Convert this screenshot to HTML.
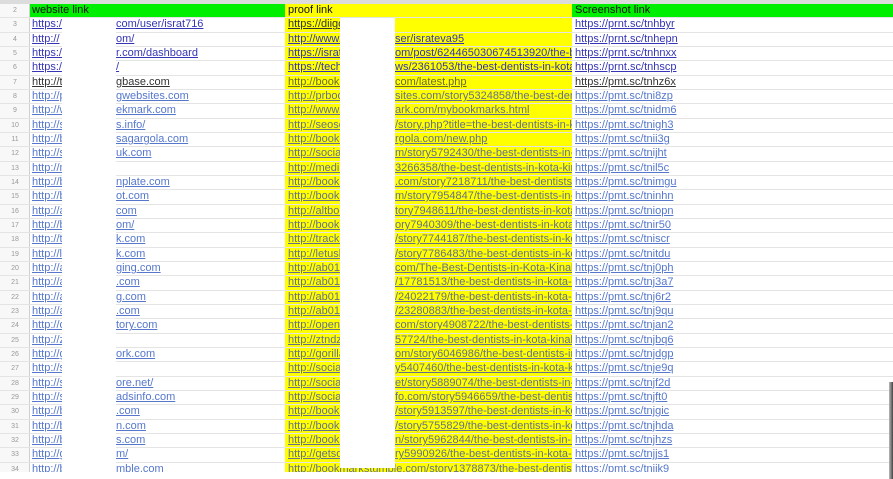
<!DOCTYPE html>
<html><head><meta charset="utf-8">
<style>
*{margin:0;padding:0;box-sizing:border-box}
body{width:893px;height:479px;overflow:hidden;background:#fff;font-family:"Liberation Sans",Arial,sans-serif;font-size:11px;position:relative}
.top{position:absolute;left:0;top:0;width:893px;height:4px;background:#dcdcdc}
.num{position:absolute;left:0;top:4px;width:30px;height:468px;background:#f8f8f8;border-right:1px solid #d0d0d0}
.yel{position:absolute;left:285px;top:4px;width:287px;height:468px;background:#ffff00}
.r{position:absolute;left:0;width:893px;height:14.33px;border-bottom:1px solid #e4e4e4;line-height:13px;white-space:nowrap}
.r span{position:absolute;top:0;overflow:hidden;text-decoration:underline}
.r i{position:absolute;left:0;width:30px;text-align:center;font-style:normal;font-size:7px;color:#999}
.a1{left:32px;width:30px}
.a2{left:116px;width:168px}
.b1{left:288px;width:52px}
.b2{left:395px;width:177px}
.c{left:575px;width:300px}
.d span{color:#3535b5}
.k span{color:#333}
.l span{color:#5577cc}
.l .b1,.l .b2{color:#66708a}
.h{top:4px;background:none;border-bottom:1px solid #e4e4e4}
.h span{text-decoration:none;color:#111}
.g{position:absolute;top:4px;height:14px;background:#00ee00}
.wb{position:absolute;background:#fff}
</style></head><body>
<div class="top"></div>
<div class="num"></div>
<div class="yel"></div>
<div class="g" style="left:30px;width:255px"></div>
<div class="g" style="left:572px;width:321px"></div>
<div class="r h"><i>2</i><span class="a1" style="width:200px">website link</span><span class="b1" style="width:200px">proof link</span><span class="c">Screenshot link</span></div>

<div class="r d" style="top:18.3px"><i>3</i><span class="a1">https:/</span><span class="a2">com/user/israt716</span><span class="b1" style="color:#333">https://diigo</span><span class="b2"></span><span class="c">https://prnt.sc/tnhbyr</span></div>
<div class="r d" style="top:32.7px"><i>4</i><span class="a1">http://</span><span class="a2">om/</span><span class="b1">http://www.</span><span class="b2">ser/israteva95</span><span class="c">https://prnt.sc/tnhepn</span></div>
<div class="r d" style="top:47px"><i>5</i><span class="a1">https:/</span><span class="a2">r.com/dashboard</span><span class="b1">https://israt</span><span class="b2">om/post/624465030674513920/the-be</span><span class="c">https://prnt.sc/tnhnxx</span></div>
<div class="r d" style="top:61.3px"><i>6</i><span class="a1">https:/</span><span class="a2">/</span><span class="b1">https://tech</span><span class="b2">ws/2361053/the-best-dentists-in-kota-ki</span><span class="c">https://prnt.sc/tnhscp</span></div>
<div class="r k" style="top:75.7px"><i>7</i><span class="a1">http://t</span><span class="a2">gbase.com</span><span class="b1" style="color:#6a6a30">http://bookm</span><span class="b2" style="color:#6a6a30">com/latest.php</span><span class="c">https://pmt.sc/tnhz6x</span></div>
<div class="r l" style="top:90px"><i>8</i><span class="a1">http://p</span><span class="a2">gwebsites.com</span><span class="b1">http://prboo</span><span class="b2">sites.com/story5324858/the-best-dentist</span><span class="c">https://pmt.sc/tni8zp</span></div>
<div class="r l" style="top:104.3px"><i>9</i><span class="a1">http://w</span><span class="a2">ekmark.com</span><span class="b1">http://www.v</span><span class="b2">ark.com/mybookmarks.html</span><span class="c">https://pmt.sc/tnidm6</span></div>
<div class="r l" style="top:118.7px"><i>10</i><span class="a1">http://s</span><span class="a2">s.info/</span><span class="b1">http://seoso</span><span class="b2">/story.php?title=the-best-dentists-in-kota-</span><span class="c">https://pmt.sc/tnigh3</span></div>
<div class="r l" style="top:133px"><i>11</i><span class="a1">http://b</span><span class="a2">sagargola.com</span><span class="b1">http://bookm</span><span class="b2">rgola.com/new.php</span><span class="c">https://pmt.sc/tnii3g</span></div>
<div class="r l" style="top:147.3px"><i>12</i><span class="a1">http://s</span><span class="a2">uk.com</span><span class="b1">http://social</span><span class="b2">m/story5792430/the-best-dentists-in-kota</span><span class="c">https://pmt.sc/tnijht</span></div>
<div class="r l" style="top:161.7px"><i>13</i><span class="a1">http://m</span><span class="a2"></span><span class="b1">http://media</span><span class="b2">3266358/the-best-dentists-in-kota-kinaba</span><span class="c">https://pmt.sc/tnil5c</span></div>
<div class="r l" style="top:176px"><i>14</i><span class="a1">http://b</span><span class="a2">nplate.com</span><span class="b1">http://bookm</span><span class="b2">.com/story7218711/the-best-dentists-in-l</span><span class="c">https://pmt.sc/tnimgu</span></div>
<div class="r l" style="top:190.3px"><i>15</i><span class="a1">http://b</span><span class="a2">ot.com</span><span class="b1">http://bookm</span><span class="b2">m/story7954847/the-best-dentists-in-kota</span><span class="c">https://pmt.sc/tninhn</span></div>
<div class="r l" style="top:204.7px"><i>16</i><span class="a1">http://a</span><span class="a2">com</span><span class="b1">http://altboo</span><span class="b2">tory7948611/the-best-dentists-in-kota-kin</span><span class="c">https://pmt.sc/tniopn</span></div>
<div class="r l" style="top:219px"><i>17</i><span class="a1">http://b</span><span class="a2">om/</span><span class="b1">http://bookm</span><span class="b2">ory7940309/the-best-dentists-in-kota-kin</span><span class="c">https://pmt.sc/tnir50</span></div>
<div class="r l" style="top:233.3px"><i>18</i><span class="a1">http://t</span><span class="a2">k.com</span><span class="b1">http://trackb</span><span class="b2">/story7744187/the-best-dentists-in-kota-</span><span class="c">https://pmt.sc/tniscr</span></div>
<div class="r l" style="top:247.7px"><i>19</i><span class="a1">http://l</span><span class="a2">k.com</span><span class="b1">http://letusb</span><span class="b2">/story7786483/the-best-dentists-in-kota-</span><span class="c">https://pmt.sc/tnitdu</span></div>
<div class="r l" style="top:262px"><i>20</i><span class="a1">http://a</span><span class="a2">ging.com</span><span class="b1">http://ab01.t</span><span class="b2">com/The-Best-Dentists-in-Kota-Kinabalu-</span><span class="c">https://pmt.sc/tnj0ph</span></div>
<div class="r l" style="top:276.3px"><i>21</i><span class="a1">http://a</span><span class="a2">.com</span><span class="b1">http://ab01.r</span><span class="b2">/17781513/the-best-dentists-in-kota-kina</span><span class="c">https://pmt.sc/tnj3a7</span></div>
<div class="r l" style="top:290.7px"><i>22</i><span class="a1">http://a</span><span class="a2">g.com</span><span class="b1">http://ab01.t</span><span class="b2">/24022179/the-best-dentists-in-kota-kin</span><span class="c">https://pmt.sc/tnj6r2</span></div>
<div class="r l" style="top:305px"><i>23</i><span class="a1">http://a</span><span class="a2">.com</span><span class="b1">http://ab01.t</span><span class="b2">/23280883/the-best-dentists-in-kota-kina</span><span class="c">https://pmt.sc/tnj9qu</span></div>
<div class="r l" style="top:319.3px"><i>24</i><span class="a1">http://o</span><span class="a2">tory.com</span><span class="b1">http://opens</span><span class="b2">com/story4908722/the-best-dentists-in-kc</span><span class="c">https://pmt.sc/tnjan2</span></div>
<div class="r l" style="top:333.7px"><i>25</i><span class="a1">http://z</span><span class="a2"></span><span class="b1">http://ztndz.</span><span class="b2">57724/the-best-dentists-in-kota-kinabalu-</span><span class="c">https://pmt.sc/tnjbq6</span></div>
<div class="r l" style="top:348px"><i>26</i><span class="a1">http://g</span><span class="a2">ork.com</span><span class="b1">http://gorilla</span><span class="b2">om/story6046986/the-best-dentists-in-kot</span><span class="c">https://pmt.sc/tnjdgp</span></div>
<div class="r l" style="top:362.3px"><i>27</i><span class="a1">http://s</span><span class="a2"></span><span class="b1">http://social</span><span class="b2">y5407460/the-best-dentists-in-kota-kinab</span><span class="c">https://pmt.sc/tnje9q</span></div>
<div class="r l" style="top:376.7px"><i>28</i><span class="a1">http://s</span><span class="a2">ore.net/</span><span class="b1">http://social</span><span class="b2">et/story5889074/the-best-dentists-in-kota</span><span class="c">https://pmt.sc/tnjf2d</span></div>
<div class="r l" style="top:391px"><i>29</i><span class="a1">http://s</span><span class="a2">adsinfo.com</span><span class="b1">http://social</span><span class="b2">fo.com/story5946659/the-best-dentists-in</span><span class="c">https://pmt.sc/tnjft0</span></div>
<div class="r l" style="top:405.3px"><i>30</i><span class="a1">http://b</span><span class="a2">.com</span><span class="b1">http://bookm</span><span class="b2">/story5913597/the-best-dentists-in-kota-k</span><span class="c">https://pmt.sc/tnjgic</span></div>
<div class="r l" style="top:419.7px"><i>31</i><span class="a1">http://b</span><span class="a2">n.com</span><span class="b1">http://bookm</span><span class="b2">/story5755829/the-best-dentists-in-kota-</span><span class="c">https://pmt.sc/tnjhda</span></div>
<div class="r l" style="top:434px"><i>32</i><span class="a1">http://b</span><span class="a2">s.com</span><span class="b1">http://bookm</span><span class="b2">n/story5962844/the-best-dentists-in-kota</span><span class="c">https://pmt.sc/tnjhzs</span></div>
<div class="r l" style="top:448.3px"><i>33</i><span class="a1">http://g</span><span class="a2">m/</span><span class="b1">http://getsoc</span><span class="b2">ry5990926/the-best-dentists-in-kota-kina</span><span class="c">https://pmt.sc/tnjjs1</span></div>
<div class="r l" style="top:462.7px"><i>34</i><span class="a1">http://b</span><span class="a2">mble.com</span><span class="b1" style="width:284px">http://bookmarkstumble.com/story1378873/the-best-dentists-in-k</span><span class="c">https://pmt.sc/tnjjk9</span></div>

<div class="wb" style="left:62px;top:18px;width:54px;height:454px"></div>
<div class="wb" style="left:340px;top:18px;width:55px;height:450px"></div>
<div class="wb" style="left:0;top:472px;width:893px;height:7px"></div>
<div style="position:absolute;left:889px;top:382px;width:4px;height:97px;background:linear-gradient(to right,#bbb,#444)"></div>
</body></html>
